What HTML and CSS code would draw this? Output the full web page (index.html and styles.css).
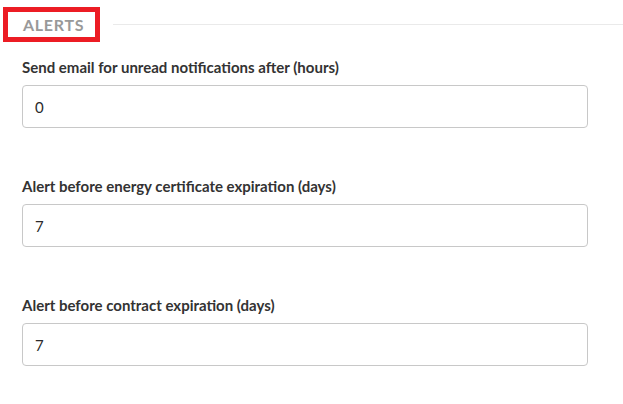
FILE: index.html
```html
<!DOCTYPE html>
<html>
<head>
<meta charset="utf-8">
<link rel="stylesheet" href="styles.css">
</head>
<body>
<div class="page">
  <div class="section-head">
    <div class="title-box"><span class="title">ALERTS</span></div>
    <div class="rule"></div>
  </div>
  <div class="fields">
    <div class="field">
      <label class="label">Send email for unread notifications after (hours)</label>
      <div class="input">0</div>
    </div>
    <div class="field">
      <label class="label">Alert before energy certificate expiration (days)</label>
      <div class="input">7</div>
    </div>
    <div class="field">
      <label class="label">Alert before contract expiration (days)</label>
      <div class="input">7</div>
    </div>
  </div>
</div>
</body>
</html>
```

FILE: styles.css
```css
html, body {
  margin: 0;
  padding: 0;
  background: #fff;
}
body {
  font-family: Lato, "Open Sans", sans-serif;
  width: 623px;
  height: 404px;
  overflow: hidden;
}
.page {
  padding: 7px 0 0 3px;
}
.section-head {
  display: flex;
  align-items: center;
  gap: 13px;
}
.title-box {
  border: 5px solid #ec1c24;
  padding: 0 14px 0 15px;
  height: 25px;
  width: 58px;
  display: flex;
  align-items: center;
}
.title {
  font-size: 16px;
  font-weight: 700;
  letter-spacing: 0.7px;
  color: #999;
  line-height: 25px;
}
.rule {
  flex: 1;
  height: 1px;
  background: #eaeaea;
  margin-top: -1px;
}
.fields {
  padding: 15px 35px 0 19px;
  display: flex;
  flex-direction: column;
  gap: 48px;
}
.field {
  display: flex;
  flex-direction: column;
  gap: 8px;
}
.label {
  font-size: 15px;
  font-weight: 700;
  line-height: 20px;
  color: #333;
}
.input {
  height: 41px;
  border: 1px solid #c8c8c8;
  border-radius: 4px;
  padding: 0 12px;
  display: flex;
  align-items: center;
  font-size: 15px;
  color: #2b2b2b;
}
```
